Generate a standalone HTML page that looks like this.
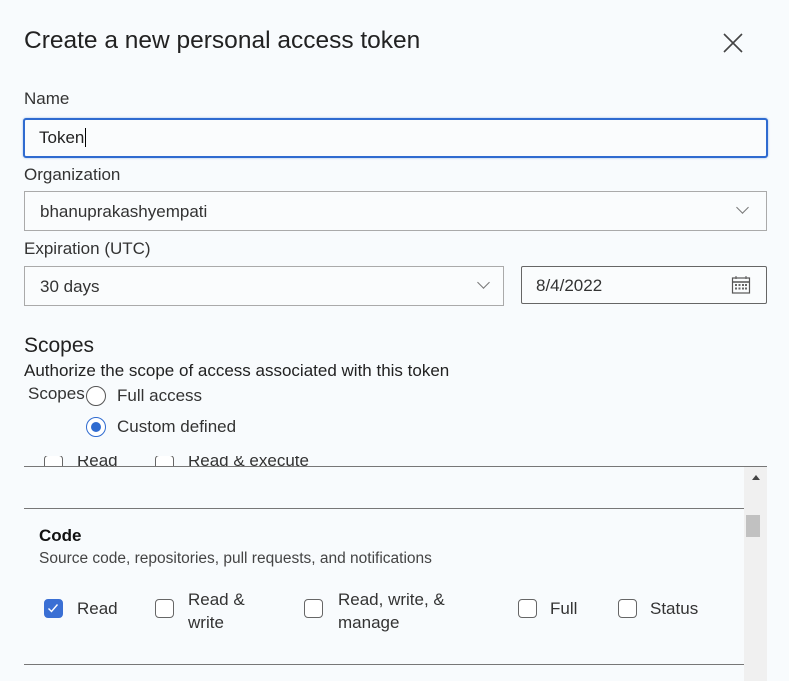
<!DOCTYPE html>
<html><head><style>
*{box-sizing:border-box;margin:0;padding:0}
body{width:789px;height:681px;background:#f8fbfd;font-family:"Liberation Sans",sans-serif;color:#222;position:relative;overflow:hidden}
.a{position:absolute;white-space:nowrap}
.t{font-size:17px;color:#333}
.box{position:absolute;border:1px solid #aaa;background:#fafcfd}
.cb{position:absolute;width:19px;height:19px;border:1.5px solid #666;border-radius:4px;background:#fff}
.chev{position:absolute;width:9px;height:9px;border-right:1.2px solid #777;border-bottom:1.2px solid #777;transform:rotate(45deg)}
</style></head><body>
<div class="a" style="left:24px;top:27px;font-size:24.5px;color:#222">Create a new personal access token</div>
<svg class="a" style="left:722px;top:32px" width="22" height="22"><path d="M2 2L20 20M20 2L2 20" stroke="#444" stroke-width="1.6"/></svg>
<div class="a t" style="left:24px;top:89px">Name</div>
<div class="box" style="left:23px;top:118px;width:745px;height:40px;border:2px solid #2f6bd0;border-radius:3px;box-shadow:0 0 2px #9bbbe8"></div>
<div class="a t" style="left:39px;top:128px;color:#222">Token<span style="border-left:1px solid #000;margin-left:1px"></span></div>
<div class="a t" style="left:24px;top:165px">Organization</div>
<div class="box" style="left:24px;top:191px;width:743px;height:40px"></div>
<div class="a t" style="left:40px;top:202px">bhanuprakashyempati</div>
<div class="chev" style="left:738px;top:203px"></div>
<div class="a t" style="left:24px;top:239px">Expiration (UTC)</div>
<div class="box" style="left:24px;top:266px;width:480px;height:40px"></div>
<div class="a t" style="left:40px;top:277px">30 days</div>
<div class="chev" style="left:479px;top:278px"></div>
<div class="box" style="left:521px;top:266px;width:246px;height:38px;border-color:#666;border-radius:2px"></div>
<div class="a t" style="left:536px;top:276px">8/4/2022</div>
<svg class="a" style="left:731px;top:275px" width="20" height="20"><rect x="1.5" y="3" width="17" height="15" fill="none" stroke="#555" stroke-width="1.2"/><line x1="1.5" y1="7" x2="18.5" y2="7" stroke="#555" stroke-width="1.5"/><line x1="5" y1="1" x2="5" y2="4" stroke="#555"/><line x1="15" y1="1" x2="15" y2="4" stroke="#555"/><g fill="#666"><rect x="4" y="9" width="2" height="2"/><rect x="7.5" y="9" width="2" height="2"/><rect x="11" y="9" width="2" height="2"/><rect x="14" y="9" width="2" height="2"/><rect x="4" y="12.5" width="2" height="2"/><rect x="7.5" y="12.5" width="2" height="2"/><rect x="11" y="12.5" width="2" height="2"/><rect x="14" y="12.5" width="2" height="2"/></g></svg>
<div class="a" style="left:24px;top:334px;font-size:21px;color:#222">Scopes</div>
<div class="a t" style="left:24px;top:361px;color:#222">Authorize the scope of access associated with this token</div>
<div class="a t" style="left:28px;top:384px">Scopes</div>
<div class="a" style="left:86px;top:386px;width:20px;height:20px;border:1.5px solid #555;border-radius:50%;background:#fff"></div>
<div class="a t" style="left:117px;top:386px">Full access</div>
<div class="a" style="left:86px;top:417px;width:20px;height:20px;border:1.5px solid #2f6bd0;border-radius:50%;background:#fff"><div style="margin:3.5px;width:10px;height:10px;border-radius:50%;background:#2f6bd0"></div></div>
<div class="a t" style="left:117px;top:417px">Custom defined</div>
<div class="a" style="left:0;top:456px;width:789px;height:10px;overflow:hidden">
 <div class="cb" style="left:44px;top:-1px"></div><div class="a t" style="left:77px;top:-5px">Read</div>
 <div class="cb" style="left:155px;top:-1px"></div><div class="a t" style="left:188px;top:-5px">Read &amp; execute</div>
</div>
<div class="a" style="left:24px;top:466px;width:743px;height:1px;background:#777"></div>
<div class="a" style="left:744px;top:467px;width:23px;height:214px;background:#f0f0f0"></div>
<svg class="a" style="left:751px;top:474px" width="10" height="8"><path d="M1 6L5 1L9 6Z" fill="#444"/></svg>
<div class="a" style="left:746px;top:515px;width:14px;height:22px;background:#c1c1c1"></div>
<div class="a" style="left:24px;top:508px;width:720px;height:1px;background:#777"></div>
<div class="a" style="left:39px;top:526px;font-size:17px;font-weight:bold;color:#111">Code</div>
<div class="a" style="left:39px;top:550px;font-size:15.5px;color:#444">Source code, repositories, pull requests, and notifications</div>
<div class="cb" style="left:44px;top:599px;background:#3a6fd4;border-color:#3a6fd4"><svg width="16" height="16" style="position:absolute;left:0;top:0"><path d="M3.5 8.5L6.5 11.5L12.5 4.5" stroke="#fff" stroke-width="1.4" fill="none"/></svg></div>
<div class="a t" style="left:77px;top:599px">Read</div>
<div class="cb" style="left:155px;top:599px"></div>
<div class="a t" style="left:188px;top:588px;line-height:23px">Read &amp;<br>write</div>
<div class="cb" style="left:304px;top:599px"></div>
<div class="a t" style="left:338px;top:588px;line-height:23px">Read, write, &amp;<br>manage</div>
<div class="cb" style="left:518px;top:599px"></div>
<div class="a t" style="left:550px;top:599px">Full</div>
<div class="cb" style="left:618px;top:599px"></div>
<div class="a t" style="left:650px;top:599px">Status</div>
<div class="a" style="left:24px;top:664px;width:720px;height:1px;background:#777"></div>
</body></html>
